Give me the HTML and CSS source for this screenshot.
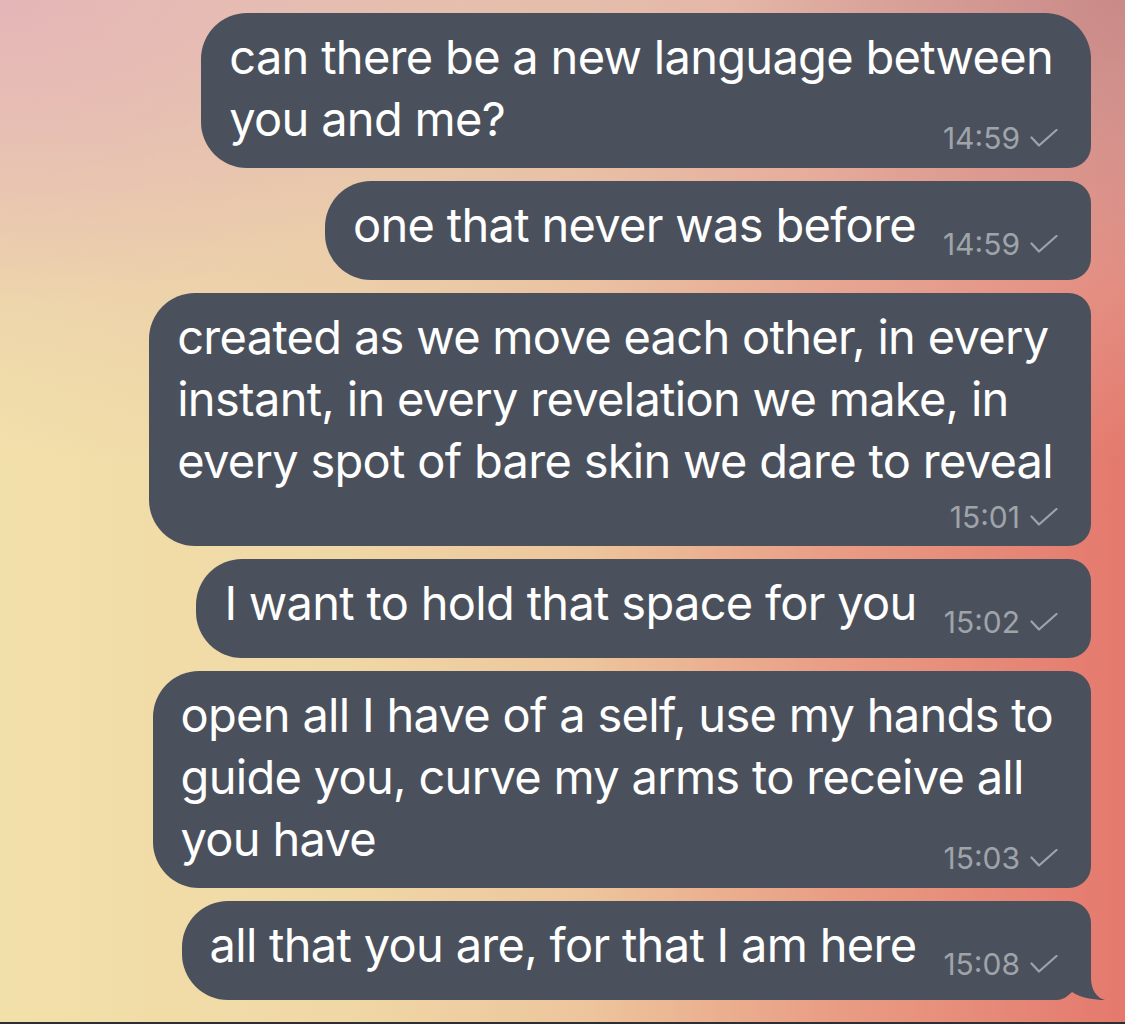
FILE: index.html
```html
<!DOCTYPE html>
<html lang="en">
<head>
    <meta charset="UTF-8">
    <title>Chat</title>

    <link rel="stylesheet" href="styles.css">

</head>
<body>


<section id="chat">
    <div class="chat_list">

        <div class="bubble bubble-first">
            <div class="bubble_text">can there be a new language between</div>
            <div class="bubble_last">
                <span class="bubble_text">you and me?</span>
                <span class="meta">14:59<svg class="meta_check" viewBox="0 0 28 18"><path d="M1.5 8.5 L9 16.5 L26.5 1"/></svg></span>
            </div>
        </div>

        <div class="bubble bubble-single">
            <div class="bubble_last">
                <span class="bubble_text">one that never was before</span>
                <span class="meta">14:59<svg class="meta_check" viewBox="0 0 28 18"><path d="M1.5 8.5 L9 16.5 L26.5 1"/></svg></span>
            </div>
        </div>

        <div class="bubble bubble-meta_row">
            <div class="bubble_text">created as we move each other, in every</div>
            <div class="bubble_text">instant, in every revelation we make, in</div>
            <div class="bubble_text">every spot of bare skin we dare to reveal</div>
            <div class="bubble_last bubble_last-end">
                <span class="meta">15:01<svg class="meta_check" viewBox="0 0 28 18"><path d="M1.5 8.5 L9 16.5 L26.5 1"/></svg></span>
            </div>
        </div>

        <div class="bubble bubble-single">
            <div class="bubble_last">
                <span class="bubble_text">I want to hold that space for you</span>
                <span class="meta">15:02<svg class="meta_check" viewBox="0 0 28 18"><path d="M1.5 8.5 L9 16.5 L26.5 1"/></svg></span>
            </div>
        </div>

        <div class="bubble">
            <div class="bubble_text">open all I have of a self, use my hands to</div>
            <div class="bubble_text">guide you, curve my arms to receive all</div>
            <div class="bubble_last">
                <span class="bubble_text">you have</span>
                <span class="meta">15:03<svg class="meta_check" viewBox="0 0 28 18"><path d="M1.5 8.5 L9 16.5 L26.5 1"/></svg></span>
            </div>
        </div>

        <div class="bubble bubble-single bubble-tail">
            <svg class="tail" viewBox="0 0 65 50"><path d="M0 0 H51 V28 C51 40 57 48 65 50 C55 50 40 48 32 42 C27 47 22 50 17 50 H0 Z"/></svg>
            <div class="bubble_last">
                <span class="bubble_text">all that you are, for that I am here</span>
                <span class="meta">15:08<svg class="meta_check" viewBox="0 0 28 18"><path d="M1.5 8.5 L9 16.5 L26.5 1"/></svg></span>
            </div>
        </div>

    </div>
</section>

<div class="home_bar"></div>

</body>
</html>
```

FILE: styles.css
```css
html, body {
    height: 100%;
}

body {
    margin: 0;
    display: flex;
    flex-flow: column nowrap;
    font-family: Inter, "Noto Sans", sans-serif;
    background:
        radial-gradient(ellipse 45% 30% at 0% 0%, rgba(229, 180, 184, .9), rgba(229, 180, 184, 0)),
        radial-gradient(ellipse 35% 28% at 100% 0%, rgba(196, 132, 132, .85), rgba(196, 132, 132, 0)),
        linear-gradient(180deg, rgba(226, 186, 176, .75) 0%, rgba(226, 186, 176, .35) 25%, rgba(226, 186, 176, 0) 45%),
        linear-gradient(90deg, #f2e0aa 0%, #f0d8a6 30%, #edc59c 52%, #e99d85 74%, #e4796d 100%);
}

#chat {
    flex: 1;
}

#chat .chat_list {
    display: flex;
    flex-flow: column nowrap;
    align-items: flex-end;
    gap: 13px;
    padding: 13px 34px 0 0;
}

.bubble {
    position: relative;
    padding: 13px 38px 18px 28px;
    background-color: #4b515c;
    border-radius: 46px 22px 22px 46px;
    color: #fff;
    font-size: 47px;
    letter-spacing: -.7px;
    line-height: 62px;
    white-space: nowrap;
}

.bubble-first {
    border-top-right-radius: 46px;
}

.bubble-single {
    padding-bottom: 24px;
}

.bubble-meta_row {
    padding-bottom: 15px;
}

.bubble-tail {
    border-bottom-right-radius: 46px;
}

.bubble_last {
    position: relative;
    display: flex;
    flex-flow: row nowrap;
    align-items: flex-end;
    justify-content: space-between;
}

.bubble_last-end {
    justify-content: flex-end;
    margin-top: 11px;
}

.meta {
    display: flex;
    align-items: center;
    margin: 0 -5px -2px 27px;
    font-size: 30px;
    letter-spacing: 0;
    line-height: 28px;
    color: #9fa4ab;
}

.bubble_last-end .meta {
    margin-bottom: 0;
}

.meta_check {
    width: 28px;
    height: 18px;
    margin-left: 10px;
    fill: none;
    stroke: #9fa4ab;
    stroke-width: 2.2;
    stroke-linecap: round;
    stroke-linejoin: round;
}

.tail {
    position: absolute;
    right: -14px;
    bottom: 0;
    width: 65px;
    height: 50px;
    fill: #4b515c;
}

.home_bar {
    height: 2px;
    background-color: #2c2e33;
}
```
